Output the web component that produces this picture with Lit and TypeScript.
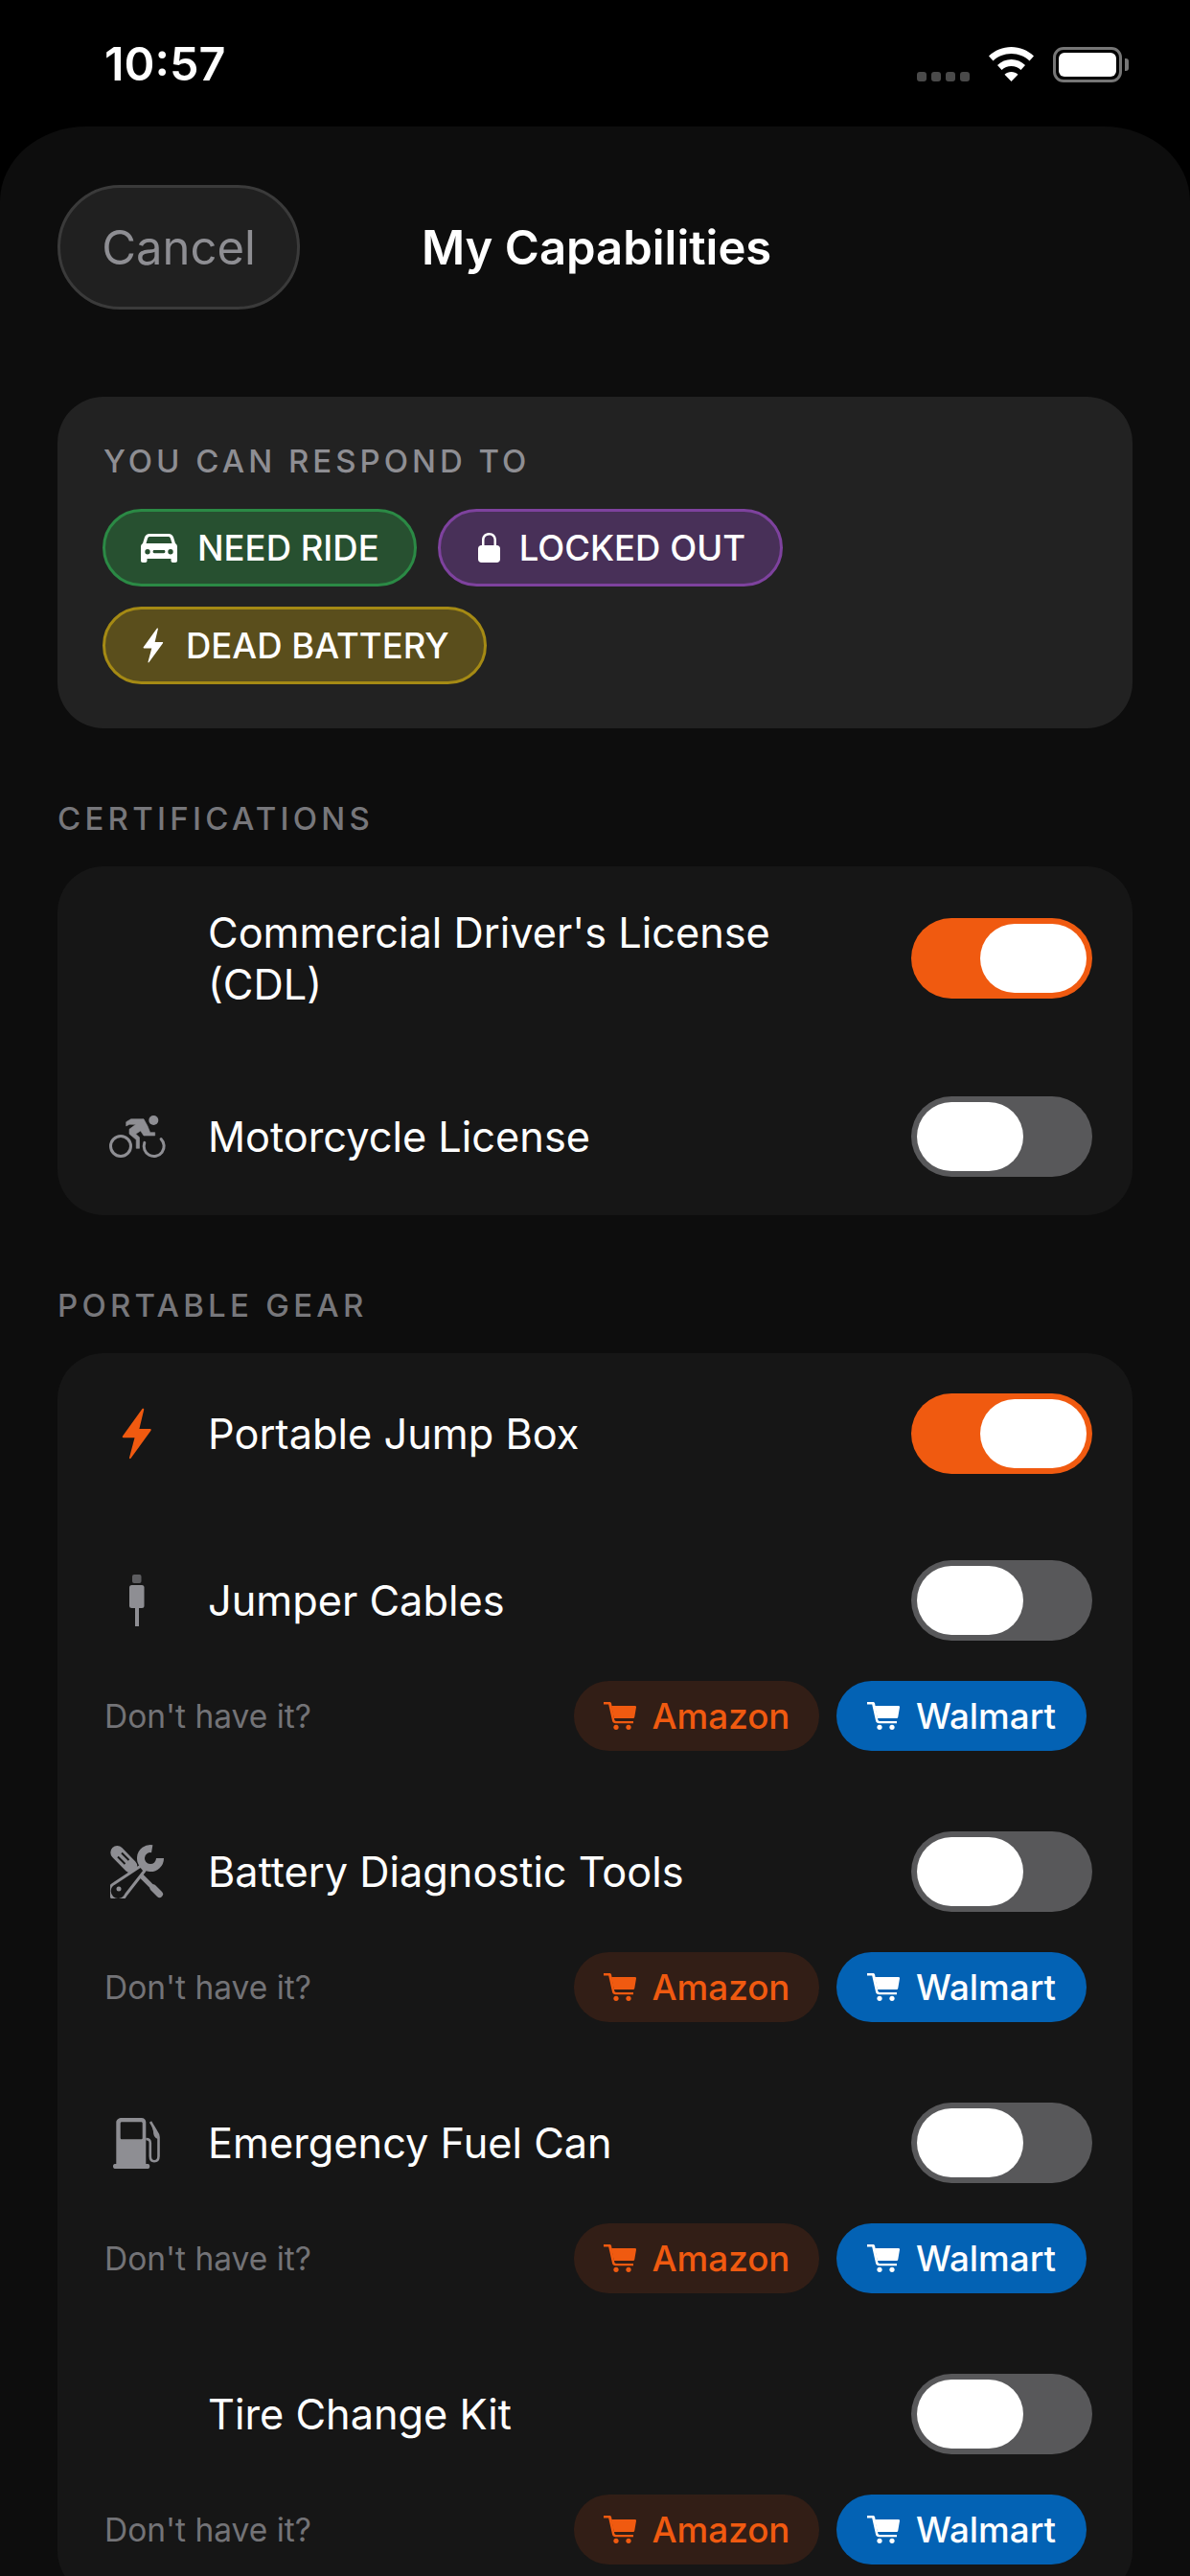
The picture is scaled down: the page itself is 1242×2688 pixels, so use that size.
import { LitElement, html, css, svg } from 'lit';
import { customElement } from 'lit/decorators.js';

const cart = svg`<path d="M0 0h6.200c1 0 1.600.5 1.900 1.500L11.300 18.500c.2.900.8 1.400 1.700 1.400h18v2.300H12.500c-2 0-3.100-1-3.500-2.800L5.200 2.500H0z"/><path d="M8 4h24.700c1 0 1.500.7 1.300 1.600l-1.700 10c-.2 1-.8 1.500-1.800 1.500H10.800z"/><circle cx="13" cy="26.300" r="2.600"/><circle cx="26" cy="26.300" r="2.600"/>`;

const bolt = svg`<path d="M22.500 1 2 29.500c-.6.900-.1 1.700.9 1.700h11.600L9 52c-.3 1.100.9 1.600 1.500.7l21-29c.6-.9.2-1.700-.9-1.700H19.400L24.200 1.900c.3-1.100-1-1.700-1.700-.9z"/>`;

const car = svg`<path fill-rule="evenodd" d="M9 0h20c2.500 0 4 1.200 5 3.500l2 6.500c1.300.8 2 2 2 3.500V28c0 1.300-.7 2-2 2h-2.500c-1.300 0-2-.7-2-2v-2H6.500v2c0 1.300-.7 2-2 2H2c-1.300 0-2-.7-2-2V13.500c0-1.500.7-2.700 2-3.500l2-6.500C5 1.200 6.500 0 9 0zM9.500 3C8.300 3 7.500 3.600 7 5l-1.500 5h27L31 5c-.5-1.400-1.300-2-2.500-2zM7 16a2.700 2.700 0 1 0 0 5.400A2.700 2.700 0 0 0 7 16zm24 0a2.700 2.700 0 1 0 0 5.400 2.700 2.700 0 0 0 0-5.400zM14 17c-.9 0-1.400.6-1.400 1.600s.5 1.700 1.400 1.700h10c.9 0 1.400-.7 1.400-1.700S24.900 17 24 17z"/>`;

const lock = svg`<path fill-rule="evenodd" d="M4 13V7.500C4 3 7 0 11.500 0S19 3 19 7.500V13h.5c2 0 3.500 1.500 3.500 3.500v11c0 2-1.500 3.500-3.500 3.500h-16C1.500 31 0 29.500 0 27.500v-11C0 14.500 1.500 13 3.500 13zm2.500 0h10V7.500c0-3-2-5-5-5s-5 2-5 5z"/>`;

const bike = svg`
  <circle cx="47.300" cy="7" r="5"/>
  <circle cx="13" cy="34" r="10.500" fill="none" stroke="currentColor" stroke-width="3"/>
  <path d="M55.100 26.600A10.500 10.500 0 1 1 37.800 30.400" fill="none" stroke="currentColor" stroke-width="3" stroke-linecap="round"/>
  <path stroke="currentColor" stroke-width=".6" stroke-linejoin="round" d="M18.700 8.700 23.700 5.700H37L41 13 43.700 19.700H48.700V23H37L33.700 18 28.700 21.300 32.500 24.700V36.300H29.200V27.300L22 21.300V16.300L28.700 11.300H22L18.700 13z"/>`;

const plug = svg`
  <rect x="3" y="0" width="9.500" height="9" rx="2" opacity=".6"/>
  <rect x="0" y="11" width="15.500" height="24" rx="2.500"/>
  <rect x="6" y="35" width="4" height="19"/>`;

const tools = svg`
  <path d="M7.300 8 21.300 22.300" fill="none" stroke="currentColor" stroke-width="14" stroke-linecap="round"/>
  <path d="M8 12.500 15.500 20M12 8.500 19.500 16" fill="none" stroke="#161616" stroke-width="2"/>
  <path d="M28 28 45.700 45.700" fill="none" stroke="currentColor" stroke-width="5"/>
  <path d="M45 45 51.500 51.500" fill="none" stroke="currentColor" stroke-width="7" stroke-linecap="round"/>
  <path d="M32 22 4 40.500A9 9 0 1 0 16.500 52L36 27z" fill="#161616" stroke="currentColor" stroke-width="3" stroke-linejoin="round"/>
  <circle cx="9" cy="46" r="2.500"/>
  <path d="M43.700 4.200A10 10 0 1 0 52 14" fill="none" stroke="currentColor" stroke-width="8"/>`;

const fuel = svg`
  <path fill-rule="evenodd" d="M9 0h20.500c3 0 4.800 1.800 4.800 4.500V48h2.200c1.100 0 1.800 1 1.800 2.500s-.7 2.500-1.800 2.500H1.800C.7 53 0 52 0 50.500S.7 48 1.800 48h1.500V4.500C3.300 1.800 6 0 9 0zm.200 4.300c-1 0-1.500.5-1.500 1.500v15c0 1 .5 1.500 1.500 1.500h20c1 0 1.500-.5 1.500-1.500v-15c0-1-.5-1.500-1.500-1.500z"/>
  <path d="M34.300 22c3 0 4.500 1.500 4.500 4v14c0 3.500 1.500 5.200 4.200 5.200s4.500-1.700 4.500-5.200V20c0-2-1-4-2.500-6L39 4" fill="none" stroke="currentColor" stroke-width="2.600"/>
  <path d="M39 4 46 14 47 22C43.500 21 42 18 42 14z"/>`;

type RowIcon = 'bolt' | 'bike' | 'plug' | 'tools' | 'fuel';
type GearRow = { name: string; icon?: RowIcon; on?: boolean; buy?: boolean };

const iconBoxes: Record<RowIcon, { box: string; art: unknown }> = {
  bolt: { box: '0 0 34 54', art: bolt },
  bike: { box: '0 0 60 48', art: bike },
  plug: { box: '0 0 16 54', art: plug },
  tools: { box: '0 0 56 56', art: tools },
  fuel: { box: '0 0 50 53', art: fuel },
};

const certs: GearRow[] = [
  { name: "Commercial Driver's License (CDL)", on: true },
  { name: 'Motorcycle License', icon: 'bike' },
];

const gear: GearRow[] = [
  { name: 'Portable Jump Box', icon: 'bolt', on: true },
  { name: 'Jumper Cables', icon: 'plug', buy: true },
  { name: 'Battery Diagnostic Tools', icon: 'tools', buy: true },
  { name: 'Emergency Fuel Can', icon: 'fuel', buy: true },
  { name: 'Tire Change Kit', buy: true },
];

@customElement('app-root')
export class AppRoot extends LitElement {
  static styles = css`
    :host {
      display: block;
      width: 1242px;
      height: 2688px;
      overflow: hidden;
      background: #000;
      color: #fff;
      font-family: Inter, 'Liberation Sans', sans-serif;
    }

    .status {
      height: 132px;
      box-sizing: border-box;
      display: flex;
      align-items: flex-start;
      justify-content: space-between;
      padding: 38px 64px 0 109px;
    }

    .time {
      font-size: 48.5px;
      line-height: 57px;
      font-weight: 600;
    }

    .status-right {
      display: flex;
      align-items: flex-start;
      padding-top: 11px;
    }

    .dots {
      display: flex;
      gap: 5px;
      margin-top: 26px;
      margin-right: 20px;
    }

    .dots span {
      width: 10px;
      height: 10px;
      border-radius: 3px;
      background: #4a4a4a;
    }

    .wifi {
      width: 47px;
      height: 36px;
      margin-right: 20px;
      fill: #fff;
    }

    .battery {
      box-sizing: border-box;
      width: 72px;
      height: 37px;
      border: 3px solid #767676;
      border-radius: 11px;
      padding: 3px;
      background: #000;
    }

    .battery span {
      display: block;
      height: 100%;
      background: #fff;
      border-radius: 6px;
    }

    .tip {
      width: 4px;
      height: 13px;
      margin: 12px 0 0 3px;
      background: #767676;
      border-radius: 0 3px 3px 0;
    }

    .sheet {
      background: #0d0d0d;
      border-radius: 90px 90px 0 0 / 78px 78px 0 0;
      padding: 61px 60px 0;
      min-height: 2556px;
      box-sizing: border-box;
    }

    .nav {
      display: flex;
      align-items: center;
      margin-bottom: 91px;
    }

    .cancel {
      box-sizing: border-box;
      width: 253px;
      height: 130px;
      border-radius: 65px;
      border: 3px solid #3a3a3a;
      background: #202020;
      color: #8e8e93;
      font: inherit;
      font-size: 49px;
      padding: 0;
    }

    .title {
      margin: 0 0 0 127px;
      font-size: 49px;
      font-weight: 600;
    }

    .summary {
      background: #222;
      border-radius: 48px;
      padding: 47px 47px 0;
      height: 346px;
      box-sizing: border-box;
    }

    .summary-label {
      font-size: 33px;
      line-height: 40px;
      font-weight: 500;
      letter-spacing: 4px;
      color: #8e8e93;
      margin-left: 1px;
      margin-bottom: 30px;
    }

    .pills {
      display: flex;
      flex-wrap: wrap;
      gap: 21px 22px;
    }

    .pill {
      box-sizing: border-box;
      height: 81px;
      display: flex;
      align-items: center;
      border-radius: 41px;
      border: 3px solid;
      font-size: 36.5px;
      font-weight: 500;
      gap: 21px;
      padding: 0 36px 0 37px;
    }

    .pill svg {
      fill: #fff;
      display: block;
    }

    .pill.green { background: #275030; border-color: #2b8a45; }
    .pill.purple { background: #483058; border-color: #7e429e; padding-left: 39px; gap: 20px; }
    .pill.yellow { background: #5a4e1c; border-color: #a58a14; padding-left: 38px; gap: 22px; }

    .pill .car { width: 38px; height: 30px; }
    .pill .lock { width: 23px; height: 31px; }
    .pill .pill-bolt { width: 24px; height: 37px; }

    .section {
      font-size: 33px;
      line-height: 38px;
      font-weight: 500;
      letter-spacing: 4.25px;
      color: #77777b;
      margin: 75px 0 31px;
    }

    .card {
      background: #161616;
      border-radius: 48px;
      padding: 0 48px;
      display: flex;
      flex-direction: column;
      gap: 8px;
    }

    .row {
      display: flex;
      align-items: center;
      padding: 42px 0 40px;
    }

    .row-icon {
      width: 70px;
      flex: none;
      margin-right: 39px;
      display: flex;
      justify-content: center;
      color: #8e8e93;
    }

    .row-icon svg {
      display: block;
      fill: currentColor;
    }

    .row-icon .bike { width: 60px; height: 48px; }
    .row-icon .plug { width: 16px; height: 54px; }
    .row-icon .tools { width: 56px; height: 56px; }
    .row-icon .fuel { width: 50px; height: 53px; }
    .row-icon .bolt { width: 34px; height: 54px; fill: #f05a10; }

    .name {
      flex: 1;
      font-size: 43.3px;
      line-height: 54px;
      padding-right: 90px;
    }

    .toggle {
      flex: none;
      box-sizing: border-box;
      width: 189px;
      height: 84px;
      border-radius: 42px;
      padding: 6px;
      background: #58585a;
      margin-right: -6px;
      display: flex;
    }

    .toggle.on {
      background: #f05a10;
      justify-content: flex-end;
    }

    .toggle span {
      width: 111px;
      height: 72px;
      border-radius: 36px;
      background: #fff;
    }

    .buy {
      display: flex;
      align-items: center;
      margin-top: 2px;
      padding-bottom: 34px;
    }

    .buy-label {
      flex: 1;
      font-size: 33.5px;
      color: #737377;
      margin-left: 1px;
    }

    .shop {
      box-sizing: border-box;
      height: 73px;
      display: flex;
      align-items: center;
      justify-content: center;
      gap: 17px;
      border-radius: 37px;
      font-size: 36.8px;
      font-weight: 500;
    }

    .shop svg {
      width: 34px;
      height: 29px;
      fill: currentColor;
      display: block;
    }

    .shop.amazon {
      width: 256px;
      background: #321e16;
      color: #f05a10;
      margin-right: 18px;
    }

    .shop.walmart {
      width: 261px;
      background: #0362b4;
      color: #fff;
    }
  `;

  private renderIcon(icon?: RowIcon) {
    if (!icon) return null;
    const { box, art } = iconBoxes[icon];
    return html`<svg class=${icon} viewBox=${box}>${art}</svg>`;
  }

  private renderRow(row: GearRow) {
    return html`
      <div class="item">
        <div class="row">
          <div class="row-icon">${this.renderIcon(row.icon)}</div>
          <div class="name">${row.name}</div>
          <div class="toggle ${row.on ? 'on' : ''}"><span></span></div>
        </div>
        ${row.buy
          ? html`<div class="buy">
              <div class="buy-label">Don't have it?</div>
              <div class="shop amazon"><svg viewBox="0 0 34 29">${cart}</svg>Amazon</div>
              <div class="shop walmart"><svg viewBox="0 0 34 29">${cart}</svg>Walmart</div>
            </div>`
          : null}
      </div>
    `;
  }

  render() {
    return html`
      <div class="status">
        <div class="time">10:57</div>
        <div class="status-right">
          <div class="dots"><span></span><span></span><span></span><span></span></div>
          <svg class="wifi" viewBox="0 0 47 36">
            <path d="M23.500 0C14.500 0 6.500 3.500 0 9.500l4.500 5C9.500 9.800 16 7 23.500 7s14 2.800 19 7.500l4.500-5C40.500 3.500 32.500 0 23.500 0z"/>
            <path d="M23.500 13c-5.500 0-10.500 2.200-14.500 6l4.500 5c2.700-2.600 6.200-4 10-4s7.300 1.400 10 4l4.500-5c-4-3.800-9-6-14.500-6z"/>
            <path d="M23.500 26c-2.700 0-5 1-7 2.800l7 7.200 7-7.200c-2-1.800-4.300-2.800-7-2.800z"/>
          </svg>
          <div class="battery"><span></span></div>
          <div class="tip"></div>
        </div>
      </div>
      <div class="sheet">
        <div class="nav">
          <button class="cancel">Cancel</button>
          <h1 class="title">My Capabilities</h1>
        </div>
        <div class="summary">
          <div class="summary-label">YOU CAN RESPOND TO</div>
          <div class="pills">
            <div class="pill green"><svg class="car" viewBox="0 0 38 30">${car}</svg>NEED RIDE</div>
            <div class="pill purple"><svg class="lock" viewBox="0 0 23 31">${lock}</svg>LOCKED OUT</div>
            <div class="pill yellow"><svg class="pill-bolt" viewBox="0 0 34 54">${bolt}</svg>DEAD BATTERY</div>
          </div>
        </div>
        <div class="section">CERTIFICATIONS</div>
        <div class="card">${certs.map((r) => this.renderRow(r))}</div>
        <div class="section">PORTABLE GEAR</div>
        <div class="card">${gear.map((r) => this.renderRow(r))}</div>
      </div>
    `;
  }
}

declare global {
  interface HTMLElementTagNameMap {
    'app-root': AppRoot;
  }
}
